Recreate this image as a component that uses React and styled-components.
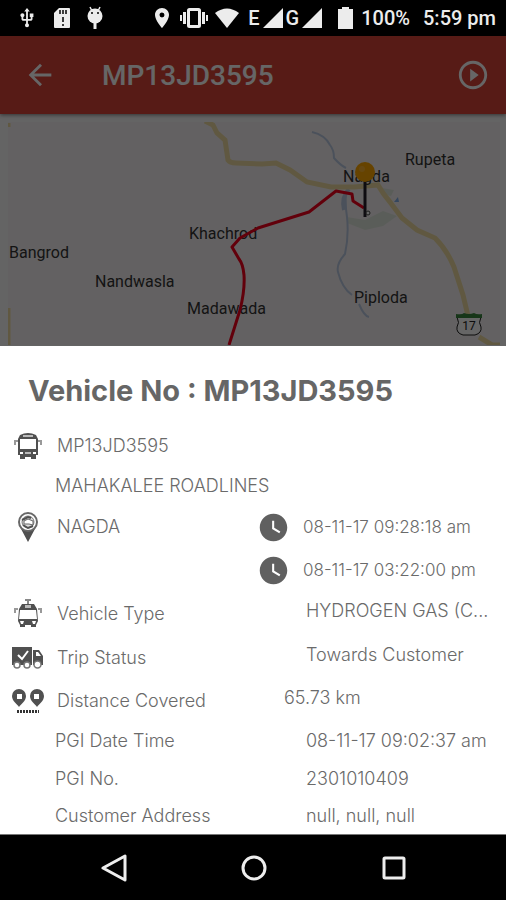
import React from "react";
import styled, { createGlobalStyle } from "styled-components";
import { MdUsb, MdLocationOn, MdArrowBack, MdPlayCircleOutline, MdWatchLater } from "react-icons/md";

const GlobalStyle = createGlobalStyle`
  *, *::before, *::after { box-sizing: border-box; }
  body { margin: 0; background: #000; font-family: Roboto, sans-serif; }
`;

const Screen = styled.div`
  display: flex;
  flex-direction: column;
  min-height: 100vh;
  background: #000;
`;

const StatusBar = styled.header`
  display: flex;
  align-items: center;
  justify-content: space-between;
  height: 36px;
  padding: 0 10px 0 16px;
  background: #000;
  color: #ececec;
  font-size: 20px;
  font-weight: 500;
  white-space: nowrap;
`;

const StatusGroup = styled.div`
  display: flex;
  align-items: center;
  gap: ${(p) => p.$gap}px;
  svg { display: block; flex: none; }
`;

const Percent = styled.span`
  margin-right: 5px;
`;

const Behind = styled.div`
  position: relative;
  display: flex;
  flex-direction: column;
  flex: 1;
  background: #fafafa;
  &::after {
    content: "";
    position: absolute;
    inset: 0;
    background: rgba(0, 0, 0, 0.6);
    pointer-events: none;
  }
`;

const AppBar = styled.div`
  display: flex;
  align-items: center;
  height: 78px;
  padding: 0 15px 0 22px;
  background: #d94439;
  color: #fff;
  box-shadow: 0 1px 4px rgba(0, 0, 0, 0.5);
`;

const BarTitle = styled.h1`
  flex: 1;
  margin: 0 0 0 44px;
  padding-top: 2px;
  font-size: 28px;
  line-height: 36px;
  font-weight: 500;
`;

const IconButton = styled.button`
  display: flex;
  align-items: center;
  justify-content: center;
  width: 36px;
  height: 36px;
  padding: 0;
  border: 0;
  background: none;
  color: inherit;
`;

const MapPanel = styled.div`
  flex: 1;
  display: flex;
  min-height: 200px;
  padding: 8px 6px 0 8px;
`;

const MapDrawing = styled.svg`
  flex: 1;
  width: 100%;
  min-height: 0;
  height: 223px;
  background: #f8f3f4;
  font: 400 16px Roboto, sans-serif;
`;

const Sheet = styled.section`
  background: #fff;
  color: #6a6a6a;
  font-family: Inter, sans-serif;
`;

const SheetTitle = styled.h2`
  margin: 0;
  padding: 27px 28px 17px;
  font-size: 29px;
  line-height: 36px;
  font-weight: 700;
  color: #666;
`;

const Details = styled.dl`
  margin: 0;
`;

const Row = styled.div`
  display: flex;
  align-items: center;
  height: ${(p) => p.$height}px;
  font-size: 18px;
  line-height: 24px;
  font-weight: 300;
  &:last-child { height: 36px; }
`;

const RowIcon = styled.span`
  display: flex;
  flex: none;
  justify-content: center;
  width: 55px;
  svg { display: block; }
`;

const Label = styled.dt`
  flex: 1;
  min-width: 0;
  padding-left: ${(p) => (p.$indent ? 2 : 0)}px;
  white-space: nowrap;
`;

const Value = styled.dd`
  display: flex;
  flex: none;
  align-items: center;
  width: ${(p) => p.$width}px;
  margin: 0;
  padding-bottom: ${(p) => (p.$raised ? 6 : 0)}px;
  white-space: nowrap;
`;

const TimeValue = styled(Value)`
  gap: 13px;
  font-size: 17px;
  svg { color: #606060; }
`;

const NavBar = styled.nav`
  display: flex;
  align-items: center;
  justify-content: center;
  gap: 104px;
  height: 66px;
  padding-left: 2px;
  background: #000;
  border-top: 1px solid #777;
  color: #eee;
`;

function SdIcon() {
  return (
    <svg width="18" height="22" viewBox="0 0 18 22">
      <path fill="currentColor" d="M6 1h10a1 1 0 0 1 1 1v18a1 1 0 0 1-1 1H2a1 1 0 0 1-1-1V6z" />
      <path stroke="#000" strokeWidth="1.5" d="M7 3v4M10 3v4M13 3v4M10 10v5M10 17v2" />
    </svg>
  );
}

function BugIcon() {
  return (
    <svg width="18" height="24" viewBox="0 0 18 24" fill="none" stroke="currentColor">
      <path strokeWidth="1.5" d="M4 1l2 4M14 1l-2 4" />
      <circle cx="9" cy="10" r="7.500" fill="currentColor" stroke="none" />
      <path strokeWidth="3" d="M9 15v8" />
      <path stroke="#000" strokeWidth="1.5" d="M5 7h2M11 7h2" />
    </svg>
  );
}

function VibrateIcon() {
  return (
    <svg width="28" height="22" viewBox="0 0 28 22" fill="none" stroke="currentColor">
      <rect x="8.500" y="2.500" width="11" height="17" rx="1" strokeWidth="3" />
      <path strokeWidth="3" d="M4.500 5v12M23.500 5v12" />
      <path strokeWidth="2" d="M1 8v6M27 8v6" />
    </svg>
  );
}

function WifiIcon() {
  return (
    <svg width="26" height="22" viewBox="0 0 26 22">
      <path fill="currentColor" d="M1 6Q13-3 25 6L13 21z" />
    </svg>
  );
}

function SignalIcon() {
  return (
    <svg width="20" height="20" viewBox="0 0 20 20">
      <path fill="currentColor" d="M20 0v20H0z" />
    </svg>
  );
}

function BatteryIcon() {
  return (
    <svg width="15" height="22" viewBox="0 0 15 22">
      <path fill="currentColor" d="M4 0h7v2h4v20H0V2h4z" />
    </svg>
  );
}

function BusIcon({ antenna }) {
  return (
    <svg width="28" height="30" viewBox="0 0 28 30">
      {antenna && <path d="M11 1h6M14 1v5" stroke="#888" strokeWidth="2" />}
      <path fill="#505050" d={antenna ? "M8 5h12l3 5 1 12-2 4v2h-5v-2h-6v2H6v-2l-2-4 1-12z" : "M6 4q8-4 16 0l2 4v16h-2v4h-5v-2h-6v2H6v-4H4V8z"} />
      <path fill="#fff" d={antenna ? "M6 11h16l1 9H5zM6 22h4l-1 3H7zM18 22h4l-1 3h-2z" : "M6 8h16v10H6zM6 21h3v2H6zM19 21h3v2h-3z"} />
      <path stroke="#bbb" strokeWidth="2" d={antenna ? "M11 7h6M11 8h6" : "M9 5h10M11 22h6"} />
      <path fill="none" stroke="#999" strokeWidth="2" d="M4 10H1v4M24 10h3v4" />
    </svg>
  );
}

function PlaceIcon() {
  return (
    <svg width="22" height="30" viewBox="0 0 22 30">
      <path fill="#505050" d="M3 15h16l-8 15z" />
      <circle cx="11" cy="10" r="9" fill="#fff" stroke="#686868" strokeWidth="2" />
      <circle cx="11" cy="10" r="6" fill="#ddd" stroke="#777" />
      <path fill="#fff" stroke="#666" d="M7 9l4-2 5 2v4l-4-1-5 0z" />
      <path fill="none" stroke="#505050" strokeWidth="2" d="M5 8l6-3 3 1M6 13l5 3 5-2" />
    </svg>
  );
}

function TruckIcon() {
  return (
    <svg width="32" height="22" viewBox="0 0 32 22">
      <path fill="#505050" d="M0 0h20v18H0zM21 3h6l4 6v9H21z" />
      <path fill="#fff" d="M24 5h2l3 4h-5z" />
      <path fill="none" stroke="#fff" strokeWidth="2" d="M6 8l4 4 6-8" />
      <g fill="#fff" stroke="#777" strokeWidth="1.500">
        <circle cx="5" cy="18" r="3" />
        <circle cx="15" cy="18" r="3" />
        <circle cx="25.500" cy="17.500" r="3.500" />
      </g>
    </svg>
  );
}

function DistanceIcon() {
  return (
    <svg width="32" height="25" viewBox="0 0 32 25">
      <path fill="#505050" d="M7 0a7 7 0 0 1 7 7c0 5-5 8-7 11C5 15 0 12 0 7a7 7 0 0 1 7-7zM25 0a7 7 0 0 1 7 7c0 5-5 8-7 11-2-3-7-6-7-11a7 7 0 0 1 7-7z" />
      <path fill="#fff" d="M5 5h5v5H5zM22 5h5v5h-5z" />
      <path stroke="#333" strokeWidth="3" strokeDasharray="2 1" d="M5 22.500h22" />
    </svg>
  );
}

function RouteMap() {
  return (
    <MapDrawing viewBox="8 122 492 223" preserveAspectRatio="xMidYMid slice" role="img" aria-label="Route map">
      <path fill="#e2e9df" d="M347 217l18 3 18-9 14 5-14 10-18 4-18-7zM382 188l12 2-3 6-9-2z" />
      <g fill="none" stroke="#bccbe4" strokeWidth="2">
        <path d="M312 132q13 3 18 13 4 5 4 13 6 7 12 10M346 192q-1 13 1 25 2 19-2 37-9 10-7 18 4 16 14 23M359 304q5 12 10 13" />
        <path strokeWidth="4" d="M349 189q-8 8-5 21" />
      </g>
      <path fill="#86b1ea" d="M394 202l4-5 1 5z" />
      <g fill="none" stroke="#efdda2" strokeWidth="5">
        <path d="M205 121l8 4 4 8 8 7 3 20q2 3 8 3l26 1 14-1 14 7 17 12 24 5 23 0 24-2q5 9 12 17l12 16 15 12 18 8q12 12 19 29l9 28 5 21M479 337l13 8h8" />
        <path strokeWidth="3" d="M9 123v4M9 308v37" />
      </g>
      <g fill="#333">
        <text x="405" y="165">Rupeta</text>
        <text x="343" y="182">Nagda</text>
        <text x="189" y="239">Khachrod</text>
        <text x="9" y="258">Bangrod</text>
        <text x="95" y="287">Nandwasla</text>
        <text x="187" y="314">Madawada</text>
        <text x="354" y="303">Piploda</text>
      </g>
      <path fill="none" stroke="#f5001d" strokeWidth="3" strokeLinejoin="round" d="M229 345l11-35q5-20 4-35-1-11-5-16l-7-12 8-9 18-10 51-16 27-21 16 3 1 7 11 7" />
      <path stroke="#24202c" strokeWidth="3" d="M365 180v37" />
      <circle cx="368" cy="213" r="2" fill="#fff" stroke="#444" />
      <circle cx="365" cy="172" r="10" fill="#ffa800" />
      <circle cx="362" cy="169" r="3" fill="#ffb52d" />
      <path fill="#fff" stroke="#222" d="M457 317q3 6 0 10-1 6 6 8h12q7-2 6-8-3-4 0-10z" />
      <path fill="#3b8840" d="M456 314q6 1 8-1 5 2 10 0 3 2 8 1v4h-26z" />
      <text x="469" y="330" fontSize="12" textAnchor="middle" fill="#222">17</text>
    </MapDrawing>
  );
}

const details = [
  { height: 40, icon: <BusIcon />, label: "MP13JD3595" },
  { height: 40, label: "MAHAKALEE ROADLINES" },
  { height: 42, icon: <PlaceIcon />, label: "NAGDA", time: "08-11-17 09:28:18 am" },
  { height: 44, time: "08-11-17 03:22:00 pm" },
  { height: 44, icon: <BusIcon antenna />, label: "Vehicle Type", value: "HYDROGEN GAS (C..." },
  { height: 44, icon: <TruckIcon />, label: "Trip Status", value: "Towards Customer" },
  { height: 42, icon: <DistanceIcon />, label: "Distance Covered", value: "65.73 km", width: 222 },
  { height: 38, label: "PGI Date Time", value: "08-11-17 09:02:37 am" },
  { height: 38, label: "PGI No.", value: "2301010409" },
  { height: 38, label: "Customer Address", value: "null, null, null" },
];

export default function App() {
  return (
    <Screen>
      <GlobalStyle />
      <StatusBar>
        <StatusGroup $gap={15}>
          <MdUsb size={22} />
          <SdIcon />
          <BugIcon />
        </StatusGroup>
        <StatusGroup $gap={8}>
          <StatusGroup $gap={6}>
            <MdLocationOn size={24} />
            <VibrateIcon />
            <WifiIcon />
          </StatusGroup>
          <StatusGroup $gap={3}>
            <span>E</span>
            <SignalIcon />
            <span>G</span>
            <SignalIcon />
          </StatusGroup>
          <span />
          <BatteryIcon />
          <Percent>100%</Percent>
          <span>5:59 pm</span>
        </StatusGroup>
      </StatusBar>
      <Behind>
        <AppBar>
          <IconButton type="button" aria-label="Back"><MdArrowBack size={34} /></IconButton>
          <BarTitle>MP13JD3595</BarTitle>
          <IconButton type="button" aria-label="Play route"><MdPlayCircleOutline size={34} /></IconButton>
        </AppBar>
        <MapPanel><RouteMap /></MapPanel>
      </Behind>
      <Sheet>
        <SheetTitle>Vehicle No : MP13JD3595</SheetTitle>
        <Details>
          {details.map((d) => (
            <Row key={d.label || d.time} $height={d.height}>
              <RowIcon>{d.icon}</RowIcon>
              <Label $indent={Boolean(d.icon)}>{d.label}</Label>
              {d.time && (
                <TimeValue $width={249}>
                  <MdWatchLater size={33} />
                  {d.time}
                </TimeValue>
              )}
              {d.value && <Value $width={d.width || 200} $raised={Boolean(d.icon)}>{d.value}</Value>}
            </Row>
          ))}
        </Details>
      </Sheet>
      <NavBar>
        <IconButton type="button" aria-label="Back">
          <svg width="26" height="28" viewBox="0 0 26 28">
            <path fill="none" stroke="currentColor" strokeWidth="3" strokeLinejoin="round" d="M24 2v24L2 14z" />
          </svg>
        </IconButton>
        <IconButton type="button" aria-label="Home">
          <svg width="26" height="26" viewBox="0 0 26 26">
            <circle cx="13" cy="13" r="11" fill="none" stroke="currentColor" strokeWidth="3" />
          </svg>
        </IconButton>
        <IconButton type="button" aria-label="Recent apps">
          <svg width="26" height="26" viewBox="0 0 26 26">
            <rect x="3" y="3" width="20" height="20" rx="1" fill="none" stroke="currentColor" strokeWidth="3" />
          </svg>
        </IconButton>
      </NavBar>
    </Screen>
  );
}
